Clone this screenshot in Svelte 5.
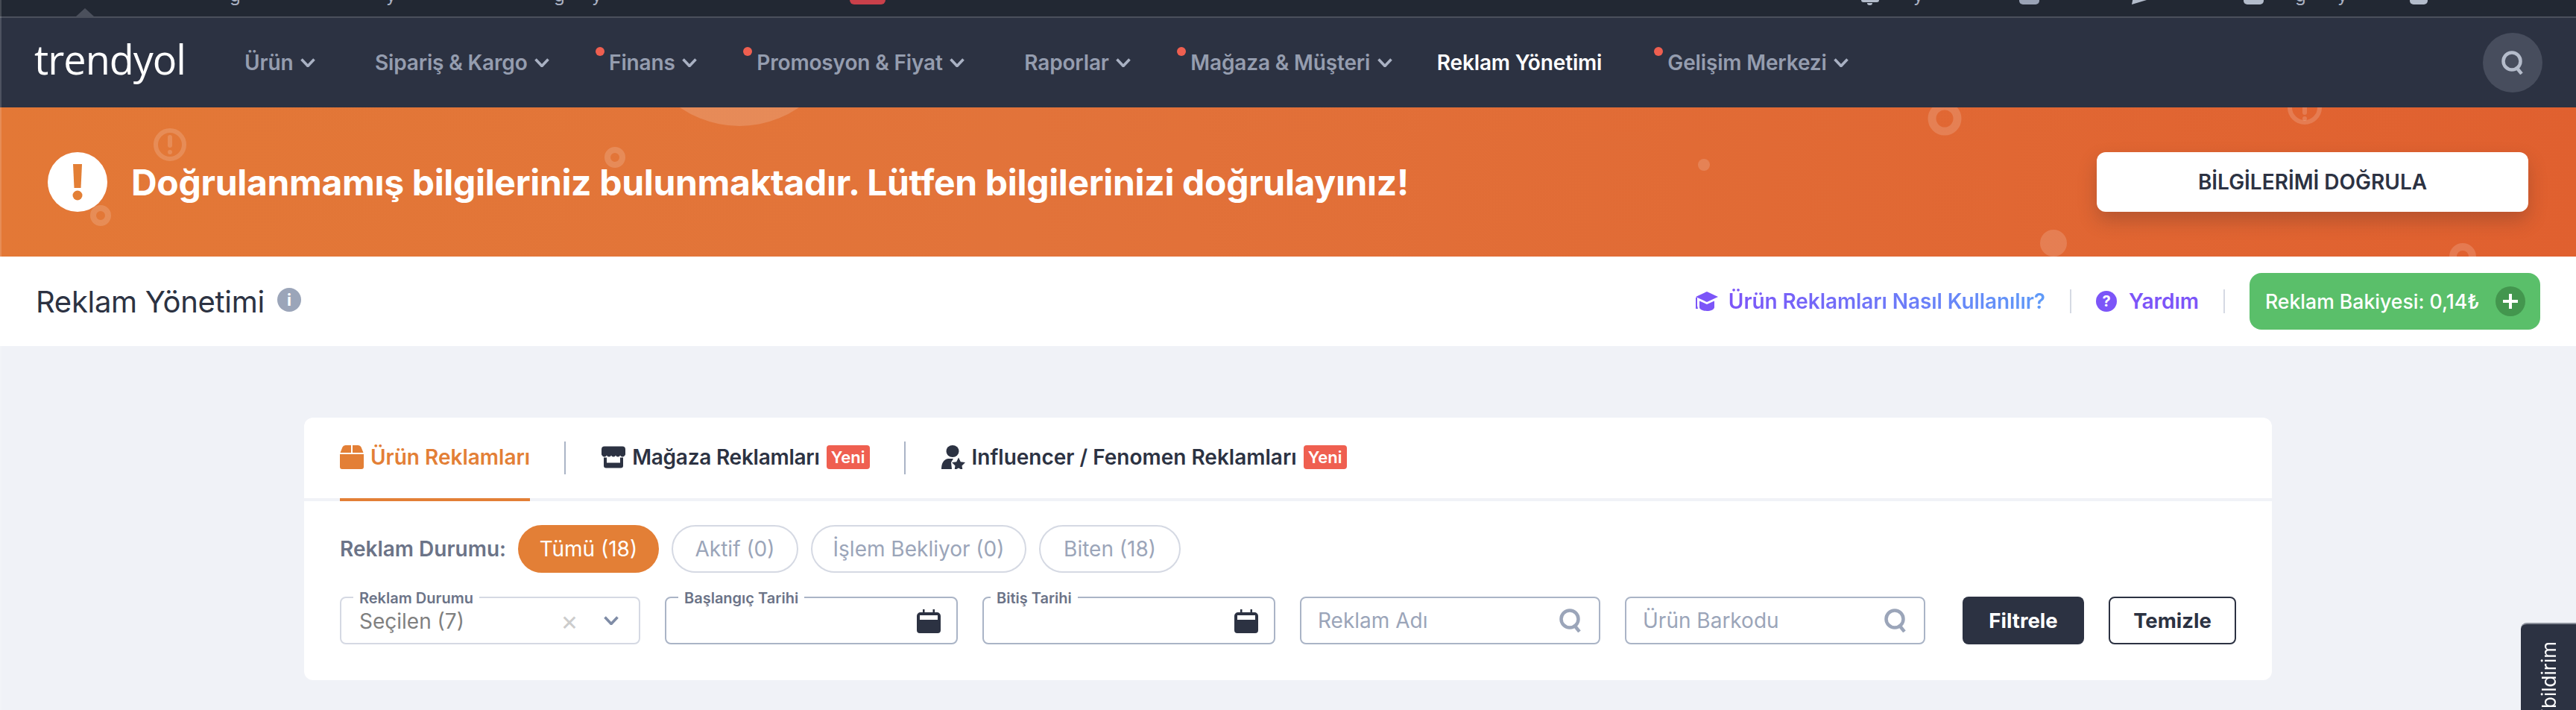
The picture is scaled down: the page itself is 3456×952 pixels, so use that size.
<script>
  const navItems = [
    { label: 'Ürün', chevron: true },
    { label: 'Sipariş & Kargo', chevron: true },
    { label: 'Finans', chevron: true, dot: true },
    { label: 'Promosyon & Fiyat', chevron: true, dot: true },
    { label: 'Raporlar', chevron: true },
    { label: 'Mağaza & Müşteri', chevron: true, dot: true },
    { label: 'Reklam Yönetimi', active: true },
    { label: 'Gelişim Merkezi', chevron: true, dot: true }
  ];
  const pills = [
    { label: 'Tümü (18)', active: true },
    { label: 'Aktif (0)' },
    { label: 'İşlem Bekliyor (0)' },
    { label: 'Biten (18)' }
  ];
</script>

{#snippet chevron(cls)}
  <svg class={cls} viewBox="0 0 20 12" aria-hidden="true"><path d="M1.5 1.5 10 10.5 18.5 1.5" fill="none" stroke="currentColor" stroke-width="3.600"/></svg>
{/snippet}

{#snippet searchIcon(cls)}
  <svg class={cls} viewBox="0 0 32 32" aria-hidden="true"><circle cx="15" cy="14" r="11.5" fill="none" stroke="currentColor" stroke-width="4.5"/><path d="M22 23.5 28 31" fill="none" stroke="currentColor" stroke-width="4.5"/></svg>
{/snippet}

{#snippet calendar()}
  <svg class="cal" viewBox="0 0 32 32" aria-hidden="true"><path d="M8 0h2.5v4h11V0H24v4h3a5 5 0 0 1 5 5v19a4 4 0 0 1-4 4H4a4 4 0 0 1-4-4V9a5 5 0 0 1 5-5h3z" fill="#2c3242"/><rect x="4" y="8" width="24" height="6" fill="#fff"/></svg>
{/snippet}

<div class="page">
  <div class="top">
    <span class="ti txt">g</span>
    <span class="ti txt">y</span>
    <span class="ti txt">g</span>
    <span class="ti txt">y</span>
    <span class="ti pill-red"></span>
    <span class="ti bell"><i></i><b></b></span>
    <span class="ti txt">y</span>
    <span class="ti block dim"></span>
    <span class="ti tail"></span>
    <span class="ti block"></span>
    <span class="ti txt">g</span>
    <span class="ti txt">y</span>
    <span class="ti block user"></span>
    <span class="caret"></span>
  </div>

  <header class="nav">
    <div class="logo">trendyol</div>
    <nav class="menu">
      {#each navItems as item}
        <span class="item" class:active={item.active} class:dot={item.dot}>
          {item.label}
          {#if item.chevron}{@render chevron('chev')}{/if}
        </span>
      {/each}
    </nav>
    <span class="nav-search">{@render searchIcon('nav-q')}</span>
  </header>

  <section class="banner">
    <svg class="decor" viewBox="0 0 3456 200" preserveAspectRatio="none" aria-hidden="true">
      <g fill="#fff" fill-opacity=".16">
        <circle cx="992" cy="-115" r="140"/>
        <circle cx="2286" cy="77" r="8"/>
        <circle cx="2755" cy="182" r="18"/>
      </g>
      <g fill="none" stroke="#fff" stroke-opacity=".16">
        <circle cx="228" cy="50" r="19" stroke-width="6"/>
        <circle cx="135" cy="145" r="10" stroke-width="8"/>
        <circle cx="825" cy="67" r="10" stroke-width="8"/>
        <circle cx="2609" cy="15" r="17" stroke-width="11"/>
        <circle cx="3092" cy="0" r="20" stroke-width="6"/>
        <circle cx="3304" cy="200" r="13" stroke-width="10"/>
      </g>
      <g fill="#fff" fill-opacity=".16">
        <rect x="225" y="37" width="6" height="17" rx="3"/>
        <circle cx="228" cy="60" r="3"/>
        <rect x="3089" y="-4" width="6" height="14" rx="3"/>
        <circle cx="3092" cy="15" r="3"/>
      </g>
    </svg>
    <div class="warn">
      <svg viewBox="0 0 80 80" aria-hidden="true"><circle cx="40" cy="40" r="40" fill="#fff"/><path d="M34 16h12l-1.500 32h-9z" fill="#e37f36"/><circle cx="40" cy="58" r="6.500" fill="#e37f36"/></svg>
      <span>Doğrulanmamış bilgileriniz bulunmaktadır. Lütfen bilgilerinizi doğrulayınız!</span>
    </div>
    <button class="verify">BİLGİLERİMİ DOĞRULA</button>
  </section>

  <section class="head">
    <h1>Reklam Yönetimi</h1>
    <span class="info">i</span>
    <div class="head-right">
      <svg class="cap" viewBox="0 0 30 26" aria-hidden="true"><path d="M15 0 30 7 15 14 0 7z" fill="#7c55f8"/><path d="M5 12.500 15 17l10-4.500V21c0 3-5 5-10 5S5 24 5 21z" fill="#7c55f8"/><path d="M0 8h2v11l1 4H-1l1-4z" fill="#7c55f8"/></svg>
      <span class="how">Ürün Reklamları Nasıl Kullanılır?</span>
      <span class="vr"></span>
      <span class="help"><i>?</i>Yardım</span>
      <span class="vr"></span>
      <span class="balance">Reklam Bakiyesi: 0,14₺<svg viewBox="0 0 40 40" aria-hidden="true"><circle cx="20" cy="20" r="20" fill="#43964e"/><path d="M20 10v20M10 20h20" stroke="#fff" stroke-width="4"/></svg></span>
    </div>
  </section>

  <main class="content">
    <div class="card">
      <div class="tabs">
        <div class="tab on">
          <svg class="ticon" viewBox="0 0 32 32" aria-hidden="true"><path d="M7.500 0H15v10H0.500L3.500 2.500Q4.500 0 7.500 0zM17 0h7.500q3 0 4 2.500L31.500 10H17zM0 12h32v17a3 3 0 0 1-3 3H3a3 3 0 0 1-3-3z" fill="#e37f36"/></svg>
          Ürün Reklamları
        </div>
        <span class="tsep"></span>
        <div class="tab tight">
          <svg class="ticon" viewBox="0 0 32 29" aria-hidden="true"><path d="M4 0h24a4 4 0 0 1 4 4v7c-1 2.500-3 3-4 3s-2.500-1-3-2c-.5 1-1.500 2-3 2s-2.500-1-3-2c-.5 1-1.500 2-3 2s-2.500-1-3-2c-.5 1-1.500 2-3 2s-2.500-1-3-2c-.5 1-2 2-3 2s-3-.5-4-3V4a4 4 0 0 1 4-4z" fill="#2c3242"/><path d="M3 15h4v7h18v-7h4v11a3 3 0 0 1-3 3H6a3 3 0 0 1-3-3z" fill="#2c3242"/></svg>
          Mağaza Reklamları
          <span class="new">Yeni</span>
        </div>
        <span class="tsep"></span>
        <div class="tab">
          <svg class="ticon" viewBox="0 0 32 32" aria-hidden="true"><ellipse cx="15" cy="8" rx="8.500" ry="8" fill="#2c3242"/><path d="M0 32c0-8 3-13 9-14h7l-3 5 1 9z" fill="#2c3242"/><path d="M23 16.500l2.800 5.700 6.200.9-4.500 4.400 1 6-5.500-2.900-5.500 2.900 1-6-4.500-4.400 6.200-.9z" fill="#2c3242"/></svg>
          Influencer / Fenomen Reklamları
          <span class="new">Yeni</span>
        </div>
      </div>

      <div class="status">
        <span class="status-label">Reklam Durumu:</span>
        {#each pills as p}
          <span class="pill" class:on={p.active}>{p.label}</span>
        {/each}
      </div>

      <div class="filters">
        <div class="field select">
          <span class="flabel">Reklam Durumu</span>
          <span class="sval">Seçilen (7)</span>
          <span class="clear">×</span>
          {@render chevron('schev')}
        </div>
        <div class="field date">
          <span class="flabel">Başlangıç Tarihi</span>
          {@render calendar()}
        </div>
        <div class="field date">
          <span class="flabel">Bitiş Tarihi</span>
          {@render calendar()}
        </div>
        <div class="field text">
          <span class="ph">Reklam Adı</span>
          {@render searchIcon('fq')}
        </div>
        <div class="field text">
          <span class="ph">Ürün Barkodu</span>
          {@render searchIcon('fq')}
        </div>
        <button class="btn dark">Filtrele</button>
        <button class="btn light">Temizle</button>
      </div>
    </div>
  </main>

  <aside class="feedback"><span>Geribildirim</span></aside>
</div>

<style>
  :global(body) { margin: 0; background: #f0f2f7; }
  .page {
    position: relative;
    width: 3456px;
    height: 952px;
    overflow: hidden;
    background: #f0f2f7;
    font-family: Inter, "Noto Sans", sans-serif;
    color: #2c3242;
  }
  .page::before {
    content: "";
    position: absolute;
    left: 0; top: 0; bottom: 0;
    width: 2px;
    background: rgba(255, 255, 255, .16);
    z-index: 2;
  }
  .top {
    position: relative;
    height: 22px;
    box-sizing: content-box;
    padding-left: 308px;
    background: #222833;
    border-bottom: 2px solid #4b505c;
    display: grid;
    grid-template-columns: 210px 225px 51px 346px 1355px 72px 142px 151px 150px 69px 57px 97px 1fr;
    align-items: start;
    overflow: hidden;
  }
  .ti.txt { font-size: 24px; line-height: 24px; margin-top: -18px; color: #aab1c2; }
  .pill-red { width: 48px; height: 6px; background: #c9404a; border-radius: 0 0 14px 14px; }
  .bell { position: relative; width: 28px; height: 8px; display: block; }
  .bell i { display: block; width: 24px; height: 3px; margin-left: 2px; background: #b3bccb; border-radius: 0 0 6px 6px; }
  .bell b { display: block; width: 7px; height: 3px; margin: 1px 0 0 10px; background: #b3bccb; border-radius: 0 0 4px 4px; }
  .block { width: 27px; height: 6px; background: #b3bccb; border-radius: 0 0 5px 5px; }
  .block.dim { background: #9aa3b6; }
  .block.user { width: 24px; }
  .tail { width: 20px; height: 6px; background: #b3bccb; clip-path: polygon(0 100%, 6% 0, 100% 0, 50% 50%); }
  .caret {
    position: absolute; left: 102px; top: 11px;
    width: 0; height: 0;
    border-left: 12px solid transparent; border-right: 12px solid transparent;
    border-bottom: 11px solid #4b505c;
  }

  .nav {
    height: 120px;
    background: #2c3242;
    display: flex;
    align-items: center;
    padding: 0 45px 0 46px;
  }
  .logo {
    width: 282px;
    flex: none;
    color: #fff;
    font-family: "Open Sans", sans-serif;
    font-size: 54px;
    font-weight: 400;
    letter-spacing: -1px;
    line-height: 1;
    margin-top: -10px;
  }
  .menu { display: flex; align-items: center; gap: 80px; flex: 1; }
  .item {
    position: relative;
    display: inline-flex;
    align-items: center;
    gap: 9.5px;
    font-size: 28px;
    font-weight: 600;
    color: #959daf;
    white-space: nowrap;
    letter-spacing: -.15px;
  }
  .item.active { color: #fff; margin-left: -20px; margin-right: 8px; }
  .item.dot::before {
    content: "";
    position: absolute;
    left: -18px;
    top: -4px;
    width: 12px;
    height: 12px;
    border-radius: 50%;
    background: #ef5f50;
  }
  .chev { width: 20px; height: 12px; color: #a9b1c3; flex: none; }
  .nav-search {
    width: 80px; height: 80px; border-radius: 50%;
    background: #474d5d;
    display: flex; align-items: center; justify-content: center;
    flex: none;
  }
  .nav-q { width: 32px; height: 32px; color: #b5bccb; }

  .banner {
    position: relative;
    height: 200px;
    background: linear-gradient(90deg, #e37836 0%, #e2733a 40%, #e0602f 100%);
    display: flex;
    align-items: center;
    padding: 0 64px;
    justify-content: space-between;
    overflow: hidden;
  }
  .decor { position: absolute; inset: 0; width: 100%; height: 100%; }
  .warn { position: relative; display: flex; align-items: center; gap: 32px; }
  .warn svg { width: 80px; height: 80px; flex: none; }
  .warn span { color: #fff; font-size: 48px; font-weight: 700; letter-spacing: -.33px; white-space: nowrap; }
  .verify {
    position: relative;
    width: 579px;
    height: 80px;
    border: 0;
    border-radius: 12px;
    background: #fff;
    color: #2c3242;
    font: 600 28px Inter, sans-serif;
    box-shadow: 0 12px 24px rgba(60, 40, 40, .25);
  }

  .head {
    height: 120px;
    background: #fff;
    display: flex;
    align-items: center;
    padding: 0 48px 0 48px;
  }
  h1 { margin: 0; font-size: 40px; font-weight: 400; color: #2c3242; letter-spacing: -.3px; }
  .info {
    width: 32px; height: 32px; border-radius: 50%;
    background: #9ba5b9; color: #fff;
    display: flex; align-items: center; justify-content: center;
    font-size: 22px; font-weight: 700; margin: -4px 0 0 17px;
  }
  .head-right { margin-left: auto; display: flex; align-items: center; }
  .cap { width: 30px; height: 26px; margin-right: 14px; }
  .how {
    font-size: 28px; font-weight: 600;
    letter-spacing: -.08px;
    background: linear-gradient(90deg, #7c55f8, #5f9bf8);
    -webkit-background-clip: text; background-clip: text;
    color: transparent;
  }
  .vr { width: 2px; height: 32px; background: #d5d9e3; margin: 0 33px; }
  .help { display: flex; align-items: center; gap: 16px; font-size: 28px; font-weight: 600; color: #7c55f8; }
  .help i {
    width: 28px; height: 28px; border-radius: 50%;
    background: #7c55f8; color: #fff;
    display: flex; align-items: center; justify-content: center;
    font-size: 20px; font-weight: 700; font-style: normal;
  }
  .balance {
    width: 390px; height: 76px; box-sizing: border-box;
    border-radius: 16px;
    background: #5abf6a; color: #fff;
    display: flex; align-items: center; justify-content: space-between;
    padding: 0 20px 0 21px;
    font-size: 26.600px; font-weight: 500;
    white-space: nowrap;
  }
  .balance svg { width: 40px; height: 40px; flex: none; }

  .content { padding: 96px 408px 0; }
  .card { height: 352px; background: #fff; border-radius: 12px; }
  .tabs {
    height: 108px;
    border-bottom: 4px solid #f0f2f7;
    display: flex;
    align-items: stretch;
    padding-left: 48px;
  }
  .tab {
    display: flex; align-items: center; gap: 9px;
    font-size: 28px; font-weight: 600; color: #2c3242;
    white-space: nowrap;
    height: 108px;
    box-sizing: border-box;
    padding-bottom: 2px;
  }
  .tab.tight { letter-spacing: -.25px; }
  .tab.on { color: #e37f36; box-shadow: 0 4px 0 #e37f36; }
  .ticon { width: 32px; height: 32px; flex: none; }
  .tsep { width: 2px; height: 44px; margin: 32px 48px 0 46px; background: #aab4c6; }
  .new {
    width: 58px; height: 32px;
    background: #ef5f50; color: #fff;
    border-radius: 4px;
    font-size: 22px; font-weight: 600;
    letter-spacing: 0;
    display: flex; align-items: center; justify-content: center;
  }

  .status { display: flex; align-items: center; gap: 17px; padding: 32px 48px 0; }
  .status-label { font-size: 28px; font-weight: 600; color: #6b7387; margin-right: -1px; }
  .pill {
    height: 64px; box-sizing: border-box;
    border: 2px solid #d5d9e3;
    border-radius: 32px;
    display: flex; align-items: center; justify-content: center;
    font-size: 28px; font-weight: 400; color: #9ba5b9;
    white-space: nowrap;
  }
  .pill:nth-child(2) { width: 189px; }
  .pill:nth-child(3) { width: 170px; }
  .pill:nth-child(4) { width: 289px; }
  .pill:nth-child(5) { width: 190px; }
  .pill.on { background: #e37f36; border-color: #e37f36; color: #fff; font-weight: 400; }

  .filters { display: flex; gap: 33px; padding: 32px 48px 0; align-items: stretch; }
  .field {
    position: relative;
    height: 64px; box-sizing: border-box;
    border: 2px solid #aab4c6;
    border-radius: 8px;
    display: flex; align-items: center;
    background: #fff;
    flex: none;
  }
  .select { width: 403px; border-color: #d5d9e3; padding-left: 24px; }
  .date { width: 393px; justify-content: flex-end; padding-right: 21px; }
  .date + .date .flabel { left: 9px; }
  .text { width: 403px; justify-content: space-between; padding: 0 22px; }
  .flabel {
    position: absolute; left: 16px; top: -12px;
    background: #fff;
    padding: 0 8px;
    font-size: 20px; font-weight: 600; line-height: 24px;
    color: #6b7387;
    white-space: nowrap;
  }
  .sval { font-size: 28px; color: #808080; margin-top: 2px; }
  .clear { position: absolute; left: 294px; font-size: 36px; color: #cccccc; line-height: 1; }
  .schev { position: absolute; left: 352px; width: 20px; height: 12px; color: #7f8ca6; }
  .cal { width: 32px; height: 32px; margin-top: 2px; }
  .ph { font-size: 28px; font-weight: 400; color: #9ba5b9; }
  .fq { width: 32px; height: 32px; color: #9ba5b9; }
  .btn {
    height: 64px; box-sizing: border-box;
    border-radius: 8px;
    font: 700 27.500px Inter, sans-serif;
    flex: none;
  }
  .dark { width: 163px; margin-left: 17px; background: #2c3242; border: 0; color: #fff; }
  .light { width: 171px; background: #fff; border: 2px solid #2c3242; color: #2c3242; }

  .feedback {
    position: absolute;
    left: 3382px;
    top: 835px;
    width: 74px;
    height: 117px;
    overflow: hidden;
    background: #2c3242;
    border-top: 2px solid #8a8f9a;
    box-sizing: border-box;
    border-top-left-radius: 8px;
  }
  .feedback span {
    position: absolute;
    left: 22px;
    top: 23px;
    writing-mode: vertical-rl;
    transform: rotate(180deg);
    color: #fff;
    font-family: Inter, sans-serif;
    font-size: 26px;
    white-space: nowrap;
  }
</style>
